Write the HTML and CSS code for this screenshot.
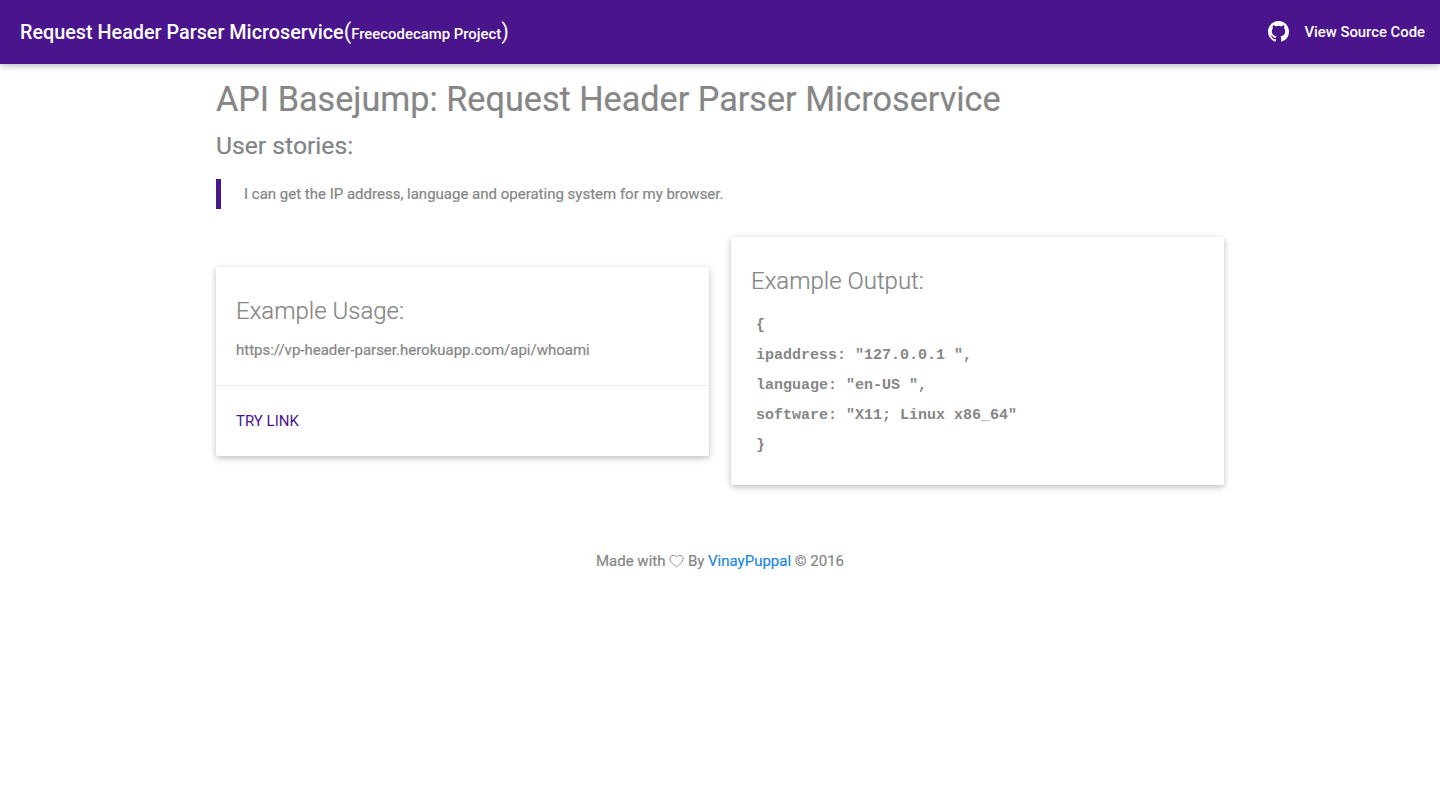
FILE: index.html
```html
<!DOCTYPE html>
<html lang="en">
<head>
<meta charset="utf-8">
<title>Request Header Parser Microservice</title>
<link rel="stylesheet" href="styles.css">
</head>
<body>
<nav class="navbar">
  <a class="brand" href="#">Request Header Parser Microservice<span class="paren">(</span><span class="brand-sub">Freecodecamp Project</span><span class="paren">)</span></a>
  <a class="source" href="#">
    <svg class="gh" viewBox="0 0 16 16" aria-hidden="true"><path fill="currentColor" d="M8 0C3.58 0 0 3.58 0 8c0 3.54 2.29 6.53 5.47 7.59.4.07.55-.17.55-.38 0-.19-.01-.82-.01-1.49-2.01.37-2.53-.49-2.69-.94-.09-.23-.48-.94-.82-1.13-.28-.15-.68-.52-.01-.53.63-.01 1.08.58 1.23.82.72 1.21 1.87.87 2.33.66.07-.52.28-.87.51-1.07-1.78-.2-3.64-.89-3.64-3.95 0-.87.31-1.59.82-2.15-.08-.2-.36-1.02.08-2.12 0 0 .67-.21 2.2.82.64-.18 1.32-.27 2-.27s1.36.09 2 .27c1.53-1.04 2.2-.82 2.2-.82.44 1.1.16 1.92.08 2.12.51.56.82 1.27.82 2.15 0 3.07-1.87 3.75-3.65 3.95.29.25.54.73.54 1.48 0 1.07-.01 1.93-.01 2.2 0 .21.15.46.55.38A8.01 8.01 0 0 0 16 8c0-4.42-3.58-8-8-8z"/></svg>
    <span>View Source Code</span>
  </a>
</nav>
<main class="container">
  <h1 class="title">API Basejump: Request Header Parser Microservice</h1>
  <h2 class="subtitle">User stories:</h2>
  <blockquote class="quote">I can get the IP address, language and operating system for my browser.</blockquote>
  <section class="cards">
    <article class="card">
      <div class="card-content">
        <h3 class="card-title">Example Usage:</h3>
        <p class="card-url">https://vp-header-parser.herokuapp.com/api/whoami</p>
      </div>
      <div class="card-action"><a href="#">TRY LINK</a></div>
    </article>
    <article class="card">
      <div class="card-content">
        <h3 class="card-title">Example Output:</h3>
        <div class="code">
          <p>{</p>
          <p>ipaddress: "127.0.0.1 ",</p>
          <p>language: "en-US ",</p>
          <p>software: "X11; Linux x86_64"</p>
          <p>}</p>
        </div>
      </div>
    </article>
  </section>
  <footer class="footer">Made with <svg class="heart" viewBox="0 0 16 15" aria-hidden="true"><path fill="none" stroke="currentColor" stroke-width="1" d="M8 13.8C5.6 11.7 1 8.6 1 5.1 1 3 2.6 1.5 4.5 1.5 6 1.5 7.3 2.3 8 3.6 8.7 2.3 10 1.5 11.500 1.500 13.400 1.500 15 3 15 5.100 15 8.600 10.400 11.700 8 13.800Z"/></svg> By <a href="#">VinayPuppal</a> © 2016</footer>
</main>
</body>
</html>
```
FILE: styles.css
```css
* { box-sizing: border-box; }
html, body { margin: 0; padding: 0; }
body {
  background: #fff;
  color: #868686;
  font-family: Roboto, "Liberation Sans", sans-serif;
  font-size: 15px;
  line-height: 1.5;
  min-height: 803px;
}
a { text-decoration: none; color: inherit; }
.navbar {
  height: 64px;
  background: #4a148c;
  color: #fff;
  display: flex;
  align-items: center;
  justify-content: space-between;
  padding: 0 15px 0 20px;
  box-shadow: 0 2px 5px 0 rgba(0,0,0,.16), 0 2px 10px 0 rgba(0,0,0,.12);
}
.brand { font-size: 19.8px; font-weight: 500; display: flex; align-items: baseline; padding-top: 2px; }
.brand-sub { font-size: 14.9px; }
.paren { font-weight: 400; font-size: 22px; line-height: 1; }
.source { display: flex; align-items: center; gap: 15px; font-size: 14.85px; font-weight: 500; }
.gh { width: 21px; height: 21px; display: block; }
.container { width: 1008px; margin: 0 auto; }
.title { margin: 9px 0 0; font-size: 34.2px; font-weight: 400; line-height: 52px; -webkit-text-stroke: .2px; }
.subtitle { margin: 3px 0 0; font-size: 24.7px; font-weight: 400; line-height: 36px; color: #7f8487; -webkit-text-stroke: .2px; }
.quote {
  margin: 15px 0 0;
  padding: 0 0 0 23px;
  border-left: 5px solid #4a148c;
  font-size: 15px;
  line-height: 30px;
  height: 30px;
  -webkit-text-stroke: .2px;
}
.cards { display: flex; align-items: center; justify-content: space-between; margin-top: 28px; }
.card {
  width: 493px;
  background: #fff;
  border-radius: 2px;
  box-shadow: 0 2px 5px 0 rgba(0,0,0,.16), 0 2px 10px 0 rgba(0,0,0,.12);
}
.card-content { padding: 20px; }
.card-title { margin: 0; font-size: 24px; font-weight: 300; line-height: 48px; -webkit-text-stroke: .2px; }
.card-url { margin: 0; font-size: 15px; line-height: 30px; -webkit-text-stroke: .2px; }
.card-action {
  border-top: 1px solid rgba(160,160,160,.2);
  padding: 20px;
  font-size: 15px;
  line-height: 30px;
  color: #4a148c;
}
.code { margin: 6px 0 4px 5px; font-family: "Liberation Mono", monospace; font-weight: 700; font-size: 15px; line-height: 30px; }
.code p { margin: 0; }
.footer { margin-top: 61px; text-align: center; font-size: 15px; line-height: 30px; -webkit-text-stroke: .2px; }
.footer a { color: #1e88e5; }
.heart { width: 15px; height: 14px; vertical-align: -2px; }
```
